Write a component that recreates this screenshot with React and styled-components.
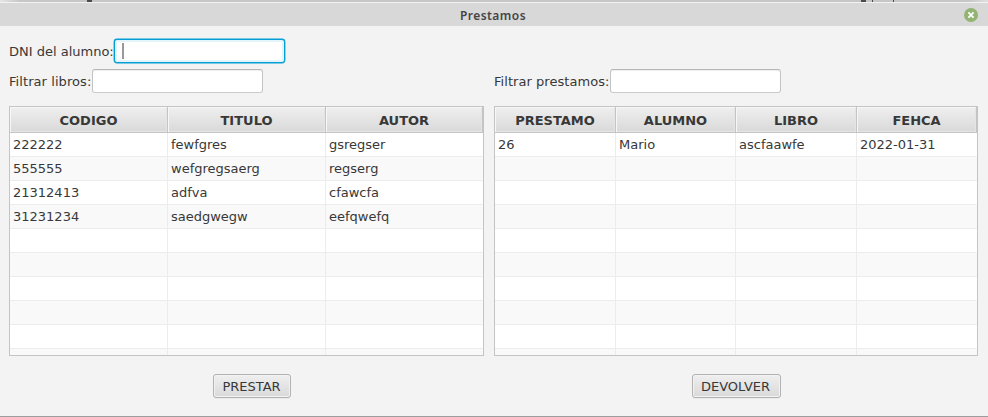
import React from "react";
import styled, { createGlobalStyle } from "styled-components";

const GlobalStyle = createGlobalStyle`
  * { box-sizing: border-box; }
  body { margin: 0; background: #f3f3f3; overflow: hidden; }
`;

const Window = styled.div`
  display: flex;
  flex-direction: column;
  width: 988px;
  height: 417px;
  background: #f3f3f3;
  border-bottom: 1px solid #9d9d9d;
  color: #383838;
  font: 13px/16px "DejaVu Sans", sans-serif;
`;

const Backdrop = styled.div`
  display: flex;
  height: 2px;
  flex: none;
  background: linear-gradient(90deg, #e6e6e6 0, #c6c6c6 20px, #c6c6c6 968px, #e0e0e0 988px);
`;

const Mark = styled.span`
  width: ${(p) => p.$width}px;
  height: 2px;
  margin-left: ${(p) => p.$gap}px;
  background: #4a4a4a;
`;

const TitleBar = styled.header`
  display: grid;
  grid-template-columns: 34px 1fr 34px;
  align-items: center;
  justify-items: center;
  height: 24px;
  flex: none;
  background: #d8d8d8;
  border-top: 1px solid #f3f3f3;
  color: #454545;
`;

const Title = styled.h1`
  grid-column: 2;
  margin: 0 2px 0 0;
  padding-top: 2px;
  font: 600 12px/20px "Noto Sans", sans-serif;
  letter-spacing: 0.45px;
`;

const CloseButton = styled.button`
  width: 14px;
  height: 14px;
  padding: 0;
  border: 0;
  border-radius: 50%;
  background: #92b372;
  svg { display: block; }
`;

const Panels = styled.main`
  display: flex;
  gap: 10px;
  padding: 13px 10px 0 9px;
`;

const Panel = styled.section`
  display: flex;
  flex-direction: column;
  width: ${(p) => p.$width}px;
`;

const Field = styled.label`
  display: flex;
  align-items: center;
  height: 24px;
  margin-bottom: 6px;
`;

const FieldSpacer = styled.div`
  height: 30px;
`;

const Caption = styled.span`
  width: ${(p) => p.$width}px;
  padding-top: 2px;
  letter-spacing: ${(p) => p.$tracking || 0}px;
  white-space: nowrap;
`;

const Input = styled.div`
  display: flex;
  align-items: center;
  width: 171px;
  height: 24px;
  padding-left: 7px;
  border: 1px solid;
  border-color: ${(p) => (p.$focused ? "#039ed3" : "#b6b6b6 #c4c4c4 #cacaca")};
  border-radius: 3px;
  background: #fff;
  box-shadow: ${(p) =>
    p.$focused
      ? "0 0 0 0.4px #039ed3, inset 0 0 0 2px #e3f4fa"
      : "inset 0 1px 1px #eee"};
`;

const Caret = styled.span`
  width: 2px;
  height: 16px;
  background: #999;
`;

const Table = styled.div`
  display: grid;
  grid-template-columns: ${(p) => p.$columns};
  grid-template-rows: 26px;
  grid-auto-rows: 24px;
  height: 250px;
  margin-top: 7px;
  overflow: hidden;
  border: 1px solid #c4c4c4;
  background: #fff;
`;

const HeaderCell = styled.div`
  border-right: 1px solid #c4c4c4;
  border-bottom: 1px solid #c4c4c4;
  background: linear-gradient(#efefef, #d9d9d9);
  box-shadow: inset 1px 1px #f7f7f7, inset -1px -1px #e5e5e5;
  font-weight: bold;
  line-height: 28px;
  text-align: center;
`;

const Cell = styled.div`
  padding-left: 3px;
  border-right: 1px solid ${(p) => (p.$last ? "transparent" : "#ececec")};
  border-bottom: 1px solid #ececec;
  background: ${(p) => (p.$odd ? "#f9f9f9" : "#fff")};
  line-height: 23px;
`;

const Button = styled.button`
  align-self: center;
  width: ${(p) => p.$width}px;
  height: 24px;
  margin: 18px 0 0 ${(p) => p.$shift || 0}px;
  padding: 1px 1px 0 0;
  border: 1px solid #b2b2b2;
  border-radius: 3px;
  background: linear-gradient(#efefef, #d9d9d9);
  box-shadow: inset 0 0 0 1px #f2f2f2, 0 1px #eaeaea;
  color: #383838;
  font: 13px/22px "DejaVu Sans", sans-serif;
`;

const books = [
  ["222222", "fewfgres", "gsregser"],
  ["555555", "wefgregsaerg", "regserg"],
  ["21312413", "adfva", "cfawcfa"],
  ["31231234", "saedgwegw", "eefqwefq"],
];
const loans = [["26", "Mario", "ascfaawfe", "2022-01-31"]];

function DataTable({ columns, headers, rows }) {
  return (
    <Table $columns={columns}>
      {headers.map((h) => <HeaderCell key={h}>{h}</HeaderCell>)}
      {Array.from({ length: 10 }, (_, r) =>
        headers.map((h, c) => (
          <Cell key={h + r} $odd={r % 2 === 1} $last={c === headers.length - 1}>
            {rows[r]?.[c]}
          </Cell>
        ))
      )}
    </Table>
  );
}

export default function App() {
  return (
    <>
      <GlobalStyle />
      <Window>
        <Backdrop>
          <Mark $gap={87} $width={5} />
          <Mark $gap={769} $width={5} />
          <Mark $gap={6} $width={1} />
          <Mark $gap={20} $width={1} />
        </Backdrop>
        <TitleBar>
          <Title>Prestamos</Title>
          <CloseButton aria-label="Cerrar">
            <svg width="14" height="14" viewBox="0 0 14 14" fill="none" stroke="#fff" strokeWidth="1.8">
              <path d="M4.4 4.4 9.6 9.6M9.6 4.4 4.4 9.6" />
            </svg>
          </CloseButton>
        </TitleBar>
        <Panels>
          <Panel $width={475}>
            <Field>
              <Caption $width={105}>DNI del alumno:</Caption>
              <Input $focused><Caret /></Input>
            </Field>
            <Field>
              <Caption $width={83} $tracking={0.07}>Filtrar libros:</Caption>
              <Input />
            </Field>
            <DataTable columns="158px 158px 157px" headers={["CODIGO", "TITULO", "AUTOR"]} rows={books} />
            <Button $width={78} $shift={11}>PRESTAR</Button>
          </Panel>
          <Panel $width={484}>
            <FieldSpacer />
            <Field>
              <Caption $width={116} $tracking={0.05}>Filtrar prestamos:</Caption>
              <Input />
            </Field>
            <DataTable
              columns="121px 120px 121px 120px"
              headers={["PRESTAMO", "ALUMNO", "LIBRO", "FEHCA"]}
              rows={loans}
            />
            <Button $width={89}>DEVOLVER</Button>
          </Panel>
        </Panels>
      </Window>
    </>
  );
}
